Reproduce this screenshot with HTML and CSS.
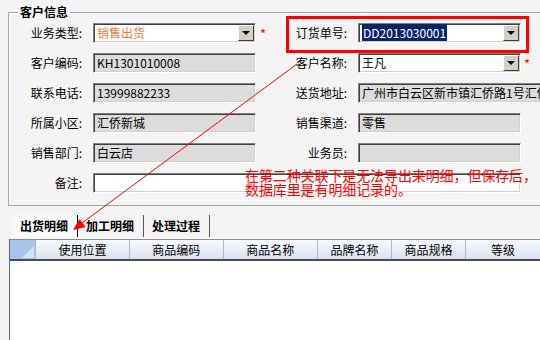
FILE: index.html
```html
<!DOCTYPE html>
<html lang="zh-CN">
<head>
    <meta charset="UTF-8">
    <title>出货单</title>
    <link rel="stylesheet" href="styles.css">
</head>
<body>
<div class="page">
    <fieldset class="group">
        <legend>客户信息</legend>
        <div class="form">
            <label>业务类型:</label>
            <div class="box white combo"><span class="val orange">销售出货</span><span class="drop"></span></div>
            <span class="star">*</span>
            <label>订货单号:</label>
            <div class="box white combo"><span class="val"><span class="sel">DD2013030001</span></span><span class="drop"></span></div>
            <span></span>

            <label>客户编码:</label>
            <div class="box"><span class="val">KH1301010008</span></div>
            <span></span>
            <label>客户名称:</label>
            <div class="box white combo"><span class="val">王凡</span><span class="drop"></span></div>
            <span class="star right">*</span>

            <label>联系电话:</label>
            <div class="box"><span class="val">13999882233</span></div>
            <span></span>
            <label>送货地址:</label>
            <div class="box wide"><span class="val">广州市白云区新市镇汇侨路1号汇侨新城</span></div>

            <label>所属小区:</label>
            <div class="box"><span class="val">汇侨新城</span></div>
            <span></span>
            <label>销售渠道:</label>
            <div class="box"><span class="val">零售</span></div>
            <span></span>

            <label>销售部门:</label>
            <div class="box"><span class="val">白云店</span></div>
            <span></span>
            <label>业务员:</label>
            <div class="box"><span class="val"></span></div>
            <span></span>

            <label>备注:</label>
            <div class="box white memo"><span class="val"></span></div>
        </div>
    </fieldset>

    <div class="tabs">
        <div class="tab active">出货明细</div>
        <div class="tab">加工明细</div>
        <div class="tab">处理过程</div>
    </div>

    <div class="table">
        <div class="thead">
            <div class="corner"></div>
            <div class="th w100">使用位置</div>
            <div class="th w100">商品编码</div>
            <div class="th w101">商品名称</div>
            <div class="th w79">品牌名称</div>
            <div class="th w79">商品规格</div>
            <div class="th w80">等级</div>
        </div>
        <div class="tbody"></div>
    </div>

    <!-- annotation drawn over the form -->
    <div class="note">在第二种关联下是无法导出来明细，但保存后，<br>数据库里是有明细记录的。</div>
    <svg class="overlay" width="540" height="340" viewBox="0 0 540 340">
        <rect x="287.5" y="17.5" width="240" height="34" fill="none" stroke="#ff0000" stroke-width="3"/>
        <line x1="297" y1="64" x2="82" y2="223" stroke="#ff0000" stroke-width="1"/>
        <polygon points="73,230 79.6,218.9 85.6,226.9" fill="#ff0000"/>
    </svg>
</div>
</body>
</html>
```

FILE: styles.css
```css
html, body {
    margin: 0;
    padding: 0;
}
body {
    background: #f4f4f4;
    font-family: "Noto Sans CJK SC", "DejaVu Sans", sans-serif;
    font-size: 12px;
    color: #000;
    overflow: hidden;
}
.page {
    position: relative;
    width: 540px;
    height: 340px;
    overflow: hidden;
}
.group {
    margin: 4px 0 0 8px;
    padding: 3px 0 12px 3px;
    width: 600px;
    border: 1px solid #a5a5a5;
    box-shadow: inset 1px 1px 0 #fff;
}
.group legend {
    margin-left: 6px;
    padding: 0 2px;
    font-weight: bold;
    line-height: 16px;
}
.form {
    display: grid;
    grid-template-columns: 81px 163px 37px 65px 163px 40px;
    grid-auto-rows: 20px;
    row-gap: 10px;
}
.form label {
    text-align: right;
    padding-right: 11px;
    line-height: 20px;
}
.box {
    position: relative;
    box-sizing: border-box;
    height: 20px;
    background: #dcdcdc;
    border: 1px solid;
    border-color: #808080 #fff #fff #808080;
    box-shadow: inset 1px 1px 0 #404040, inset -1px -1px 0 #d4d0c8;
    overflow: hidden;
}
.box.white {
    background: #fff;
}
.box.wide {
    width: 200px;
    grid-column: 5 / 7;
}
.box.memo {
    grid-column: 2 / 6;
}
.val {
    display: block;
    padding-left: 3px;
    line-height: 18px;
    white-space: nowrap;
}
.orange {
    color: #f4793b;
}
.sel {
    background: #0a246a;
    color: #fff;
    padding: 0 1px;
}
.drop {
    position: absolute;
    top: 1px;
    right: 1px;
    width: 16px;
    height: 16px;
    box-sizing: border-box;
    background: #d4d0c8;
    border: 1px solid;
    border-color: #fff #404040 #404040 #fff;
}
.drop::after {
    content: "";
    position: absolute;
    left: 3px;
    top: 5px;
    border-left: 4px solid transparent;
    border-right: 4px solid transparent;
    border-top: 4px solid #000;
}
.star {
    color: #ff0000;
    padding-left: 4px;
    line-height: 22px;
    font-size: 13px;
}
.star.right {
    padding-left: 3px;
}
.tabs {
    display: flex;
    margin-top: 7px;
    padding-left: 12px;
    height: 25px;
}
.tab {
    width: 57px;
    padding-left: 8px;
    margin: 2px 0 1px;
    border-right: 1px solid #555;
    line-height: 22px;
    font-weight: bold;
}
.tab.active {
    background: #f9f9f9;
    border-right-color: #000;
}
.table {
    margin: 1px 0 0 9px;
    border-left: 1px solid #666;
    background: #fff;
}
.thead {
    display: flex;
    height: 19px;
    border-top: 1px solid #8c8c8c;
    border-bottom: 2px solid #4c4c4c;
    background: linear-gradient(#f7f9fd, #dae2ee);
}
.corner {
    position: relative;
    width: 27px;
    background: #a9c5ec;
}
.corner::after {
    content: "";
    position: absolute;
    right: 1px;
    bottom: 1px;
    border-left: 12px solid transparent;
    border-bottom: 12px solid #d6e0ee;
}
.th {
    box-sizing: border-box;
    border-left: 1px solid #a7bad2;
    text-align: center;
    line-height: 19px;
    white-space: nowrap;
}
.w100 { width: 100px; }
.w101 { width: 101px; }
.w79 { width: 79px; }
.w80 { width: 80px; }
.tbody {
    height: 80px;
}
.note {
    position: absolute;
    left: 245px;
    top: 168px;
    color: #ff0000;
    font-size: 14px;
    line-height: 14px;
    letter-spacing: -0.1px;
    white-space: nowrap;
}
.overlay {
    position: absolute;
    left: 0;
    top: 0;
    pointer-events: none;
}
```
